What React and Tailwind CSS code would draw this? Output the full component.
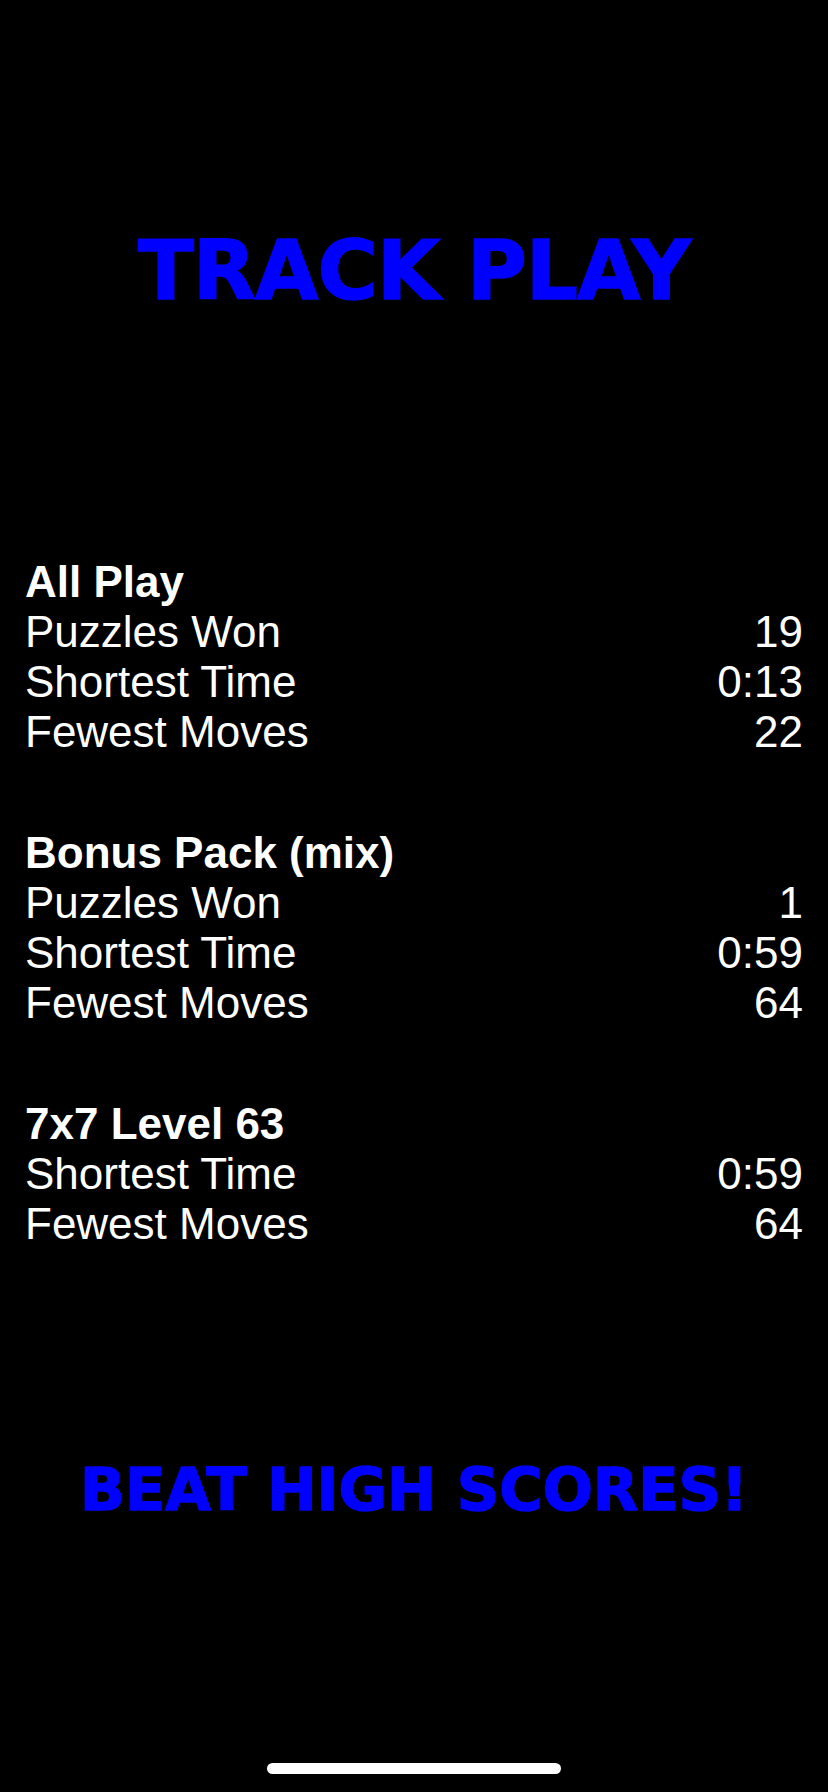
import React from "react";

const sections = [
  {
    title: "All Play",
    rows: [
      ["Puzzles Won", "19"],
      ["Shortest Time", "0:13"],
      ["Fewest Moves", "22"],
    ],
  },
  {
    title: "Bonus Pack (mix)",
    rows: [
      ["Puzzles Won", "1"],
      ["Shortest Time", "0:59"],
      ["Fewest Moves", "64"],
    ],
  },
  {
    title: "7x7 Level 63",
    rows: [
      ["Shortest Time", "0:59"],
      ["Fewest Moves", "64"],
    ],
  },
];

const StatSection = ({ title, rows }) => (
  <div className="flex flex-col">
    <div className="font-bold">{title}</div>
    {rows.map(([label, value]) => (
      <div key={label} className="flex justify-between">
        <span>{label}</span>
        <span>{value}</span>
      </div>
    ))}
  </div>
);

const App = () => {
  return (
    <div className="relative w-full min-h-[1792px] bg-black flex flex-col overflow-hidden">
      {/* Titulo */}
      <h1 className="pt-[230px] text-center text-[#0000ff] font-bold text-[82px] leading-none tracking-[-1px] [-webkit-text-stroke:1.5px_#0000ff] font-['DejaVu_Sans',sans-serif]">
        TRACK PLAY
      </h1>

      {/* Estadisticas */}
      <div className="mt-[245px] px-[25px] flex flex-col gap-[71px] text-white text-[44px] leading-[50px] font-['Liberation_Sans',Arial,sans-serif]">
        {sections.map((s) => (
          <StatSection key={s.title} title={s.title} rows={s.rows} />
        ))}
      </div>

      <div className="mt-[211px] text-center text-[#0000ff] font-bold text-[59px] leading-none tracking-[0px] [-webkit-text-stroke:1.5px_#0000ff] font-['DejaVu_Sans',sans-serif]">
        BEAT HIGH SCORES!
      </div>

      {/* Indicador de inicio */}
      <div className="absolute bottom-[18px] left-1/2 -translate-x-1/2 w-[294px] h-[11px] rounded-full bg-white" />
    </div>
  );
};

export default App;
